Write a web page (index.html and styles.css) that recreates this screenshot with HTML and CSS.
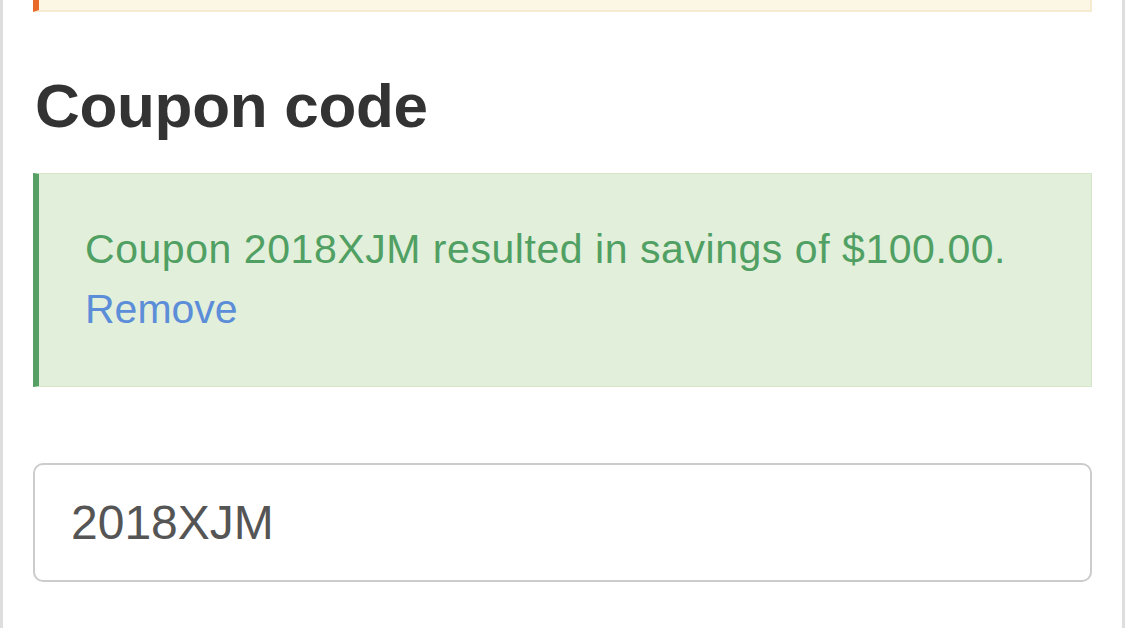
FILE: index.html
```html
<!DOCTYPE html>
<html lang="en">
<head>
<meta charset="utf-8">
<title>Coupon code</title>
<link rel="stylesheet" href="styles.css">
</head>
<body>
<div class="page">
  <div class="notice"></div>
  <h2 class="title">Coupon code</h2>
  <div class="alert">
    <span class="message">Coupon 2018XJM resulted in savings of $100.00.</span><br>
    <a class="link" href="#">Remove</a>
  </div>
  <input class="field" type="text" value="2018XJM">
</div>
</body>
</html>
```
FILE: styles.css
```css
html, body {
  margin: 0;
  padding: 0;
  background: #fff;
}
body {
  font-family: "Liberation Sans", Arial, Helvetica, sans-serif;
}
.page {
  box-sizing: border-box;
  width: 1125px;
  height: 628px;
  border-left: 3px solid #dedede;
  border-right: 3px solid #dedede;
  padding: 0 30px;
  display: flex;
  flex-direction: column;
  overflow: hidden;
}
.notice {
  height: 10px;
  background: #fcf7e4;
  border-left: 6px solid #e8692a;
  border-bottom: 2px solid #f6ebd1;
  border-right: 2px solid #f6ebd1;
  flex: none;
}
.title {
  margin: 60px 0 0 2px;
  font-size: 62px;
  font-weight: bold;
  line-height: 68px;
  color: #333;
  letter-spacing: -0.3px;
}
.alert {
  margin-top: 33px;
  background: #e2efda;
  border: 1px solid #d3e7c8;
  border-left: 6px solid #56a065;
  padding: 45px 45px 47px 46px;
  font-size: 41px;
  line-height: 60px;
  color: #50a063;
}
.message {
  letter-spacing: 0.55px;
}
.link {
  color: #5b8dd8;
  text-decoration: none;
}
.field {
  box-sizing: border-box;
  margin-top: 76px;
  height: 119px;
  width: 100%;
  border: 2px solid #cccccc;
  border-radius: 10px;
  padding: 0 36px;
  font-family: "Liberation Sans", Arial, Helvetica, sans-serif;
  font-size: 48px;
  color: #555;
  background: #fff;
  outline: none;
}
```
